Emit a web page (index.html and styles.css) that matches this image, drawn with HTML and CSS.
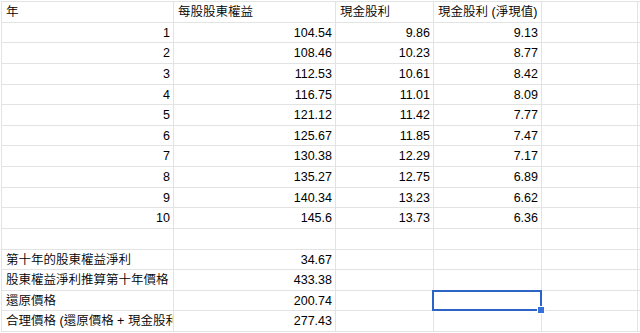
FILE: index.html
```html
<!DOCTYPE html>
<html lang="zh-Hant">
<head>
<meta charset="utf-8">
<link rel="stylesheet" href="styles.css">
</head>
<body>
<div class="sheet">
  <div class="c t">年</div><div class="c t">每股股東權益</div><div class="c t">現金股利</div><div class="c t">現金股利 (淨現值)</div><div class="c"></div><div class="c"></div>
  <div class="c n">1</div><div class="c n">104.54</div><div class="c n">9.86</div><div class="c n">9.13</div><div class="c"></div><div class="c"></div>
  <div class="c n">2</div><div class="c n">108.46</div><div class="c n">10.23</div><div class="c n">8.77</div><div class="c"></div><div class="c"></div>
  <div class="c n">3</div><div class="c n">112.53</div><div class="c n">10.61</div><div class="c n">8.42</div><div class="c"></div><div class="c"></div>
  <div class="c n">4</div><div class="c n">116.75</div><div class="c n">11.01</div><div class="c n">8.09</div><div class="c"></div><div class="c"></div>
  <div class="c n">5</div><div class="c n">121.12</div><div class="c n">11.42</div><div class="c n">7.77</div><div class="c"></div><div class="c"></div>
  <div class="c n">6</div><div class="c n">125.67</div><div class="c n">11.85</div><div class="c n">7.47</div><div class="c"></div><div class="c"></div>
  <div class="c n">7</div><div class="c n">130.38</div><div class="c n">12.29</div><div class="c n">7.17</div><div class="c"></div><div class="c"></div>
  <div class="c n">8</div><div class="c n">135.27</div><div class="c n">12.75</div><div class="c n">6.89</div><div class="c"></div><div class="c"></div>
  <div class="c n">9</div><div class="c n">140.34</div><div class="c n">13.23</div><div class="c n">6.62</div><div class="c"></div><div class="c"></div>
  <div class="c n">10</div><div class="c n">145.6</div><div class="c n">13.73</div><div class="c n">6.36</div><div class="c"></div><div class="c"></div>
  <div class="c"></div><div class="c"></div><div class="c"></div><div class="c"></div><div class="c"></div><div class="c"></div>
  <div class="c t">第十年的股東權益淨利</div><div class="c n">34.67</div><div class="c"></div><div class="c"></div><div class="c"></div><div class="c"></div>
  <div class="c t">股東權益淨利推算第十年價格</div><div class="c n">433.38</div><div class="c"></div><div class="c"></div><div class="c"></div><div class="c"></div>
  <div class="c t">還原價格</div><div class="c n">200.74</div><div class="c"></div><div class="c sel"></div><div class="c"></div><div class="c"></div>
  <div class="c t">合理價格 (還原價格 + 現金股利)</div><div class="c n">277.43</div><div class="c"></div><div class="c"></div><div class="c"></div><div class="c"></div>
</div>
</body>
</html>
```
FILE: styles.css
```css
html, body {
  margin: 0;
  padding: 0;
  background: #fff;
}
body {
  font-family: "Liberation Sans", "Noto Sans CJK TC", sans-serif;
  font-size: 12.5px;
  color: #000;
  overflow: hidden;
}
.sheet {
  margin: 1px 0 0 1px;
  display: grid;
  grid-template-columns: 172px 162px 98px 108px 96px 1fr;
  grid-auto-rows: 20.625px;
  border-top: 1px solid #e2e3e3;
  border-left: 1px solid #e2e3e3;
}
.c {
  border-right: 1px solid #e2e3e3;
  border-bottom: 1px solid #e2e3e3;
  display: flex;
  align-items: center;
  padding: 1px 3px 0 4px;
  white-space: nowrap;
  overflow: hidden;
  min-width: 0;
  line-height: 1;
}
.t {
  justify-content: flex-start;
  font-weight: 350;
}
.n {
  justify-content: flex-end;
}
.sel {
  position: relative;
  overflow: visible;
}
.sel::after {
  content: "";
  position: absolute;
  top: -1px;
  left: -2px;
  right: -1px;
  bottom: -1px;
  border: 2px solid #2c64c6;
}
.sel::before {
  content: "";
  position: absolute;
  right: -4px;
  bottom: -4px;
  width: 6px;
  height: 6px;
  background: #3471dc;
  border: 1px solid #fff;
  z-index: 2;
}
```
